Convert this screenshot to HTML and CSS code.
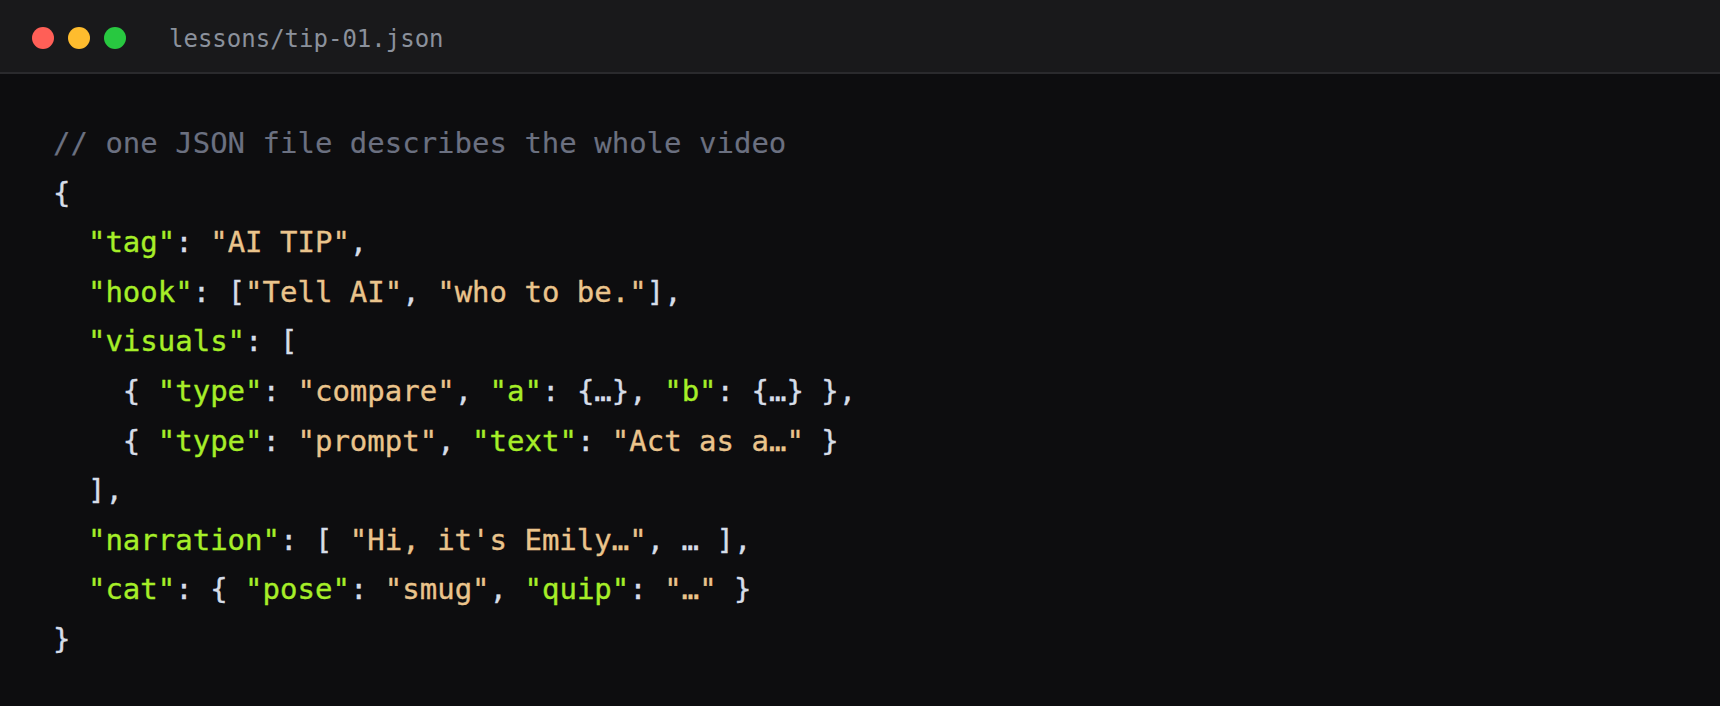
FILE: index.html
```html
<!DOCTYPE html>
<html lang="en">
<head>
<meta charset="utf-8">
<title>lessons/tip-01.json</title>
<link rel="stylesheet" href="styles.css">
</head>
<body>
<div class="window">
  <header class="titlebar">
    <div class="dots">
      <span class="dot red"></span>
      <span class="dot yellow"></span>
      <span class="dot green"></span>
    </div>
    <span class="filename">lessons/tip-01.json</span>
  </header>
  <pre class="code"><span class="c">// one JSON file describes the whole video</span>
<span class="p">{</span>
  <span class="k">"tag"</span><span class="p">:</span> <span class="s">"AI TIP"</span><span class="p">,</span>
  <span class="k">"hook"</span><span class="p">:</span> <span class="p">[</span><span class="s">"Tell AI"</span><span class="p">,</span> <span class="s">"who to be."</span><span class="p">],</span>
  <span class="k">"visuals"</span><span class="p">:</span> <span class="p">[</span>
    <span class="p">{</span> <span class="k">"type"</span><span class="p">:</span> <span class="s">"compare"</span><span class="p">,</span> <span class="k">"a"</span><span class="p">:</span> <span class="p">{…},</span> <span class="k">"b"</span><span class="p">:</span> <span class="p">{…} },</span>
    <span class="p">{</span> <span class="k">"type"</span><span class="p">:</span> <span class="s">"prompt"</span><span class="p">,</span> <span class="k">"text"</span><span class="p">:</span> <span class="s">"Act as a…"</span> <span class="p">}</span>
  <span class="p">],</span>
  <span class="k">"narration"</span><span class="p">:</span> <span class="p">[</span> <span class="s">"Hi, it's Emily…"</span><span class="p">, … ],</span>
  <span class="k">"cat"</span><span class="p">:</span> <span class="p">{</span> <span class="k">"pose"</span><span class="p">:</span> <span class="s">"smug"</span><span class="p">,</span> <span class="k">"quip"</span><span class="p">:</span> <span class="s">"…"</span> <span class="p">}</span>
<span class="p">}</span></pre>
</div>
</body>
</html>
```
FILE: styles.css
```css
html, body {
  margin: 0;
  padding: 0;
  background: #ffffff;
}

.window {
  display: flex;
  flex-direction: column;
  background: #0d0d0f;
  font-family: "DejaVu Sans Mono", "Liberation Mono", monospace;
}

.titlebar {
  display: flex;
  align-items: center;
  gap: 43px;
  height: 74px;
  padding: 4px 0 0 32px;
  box-sizing: border-box;
  background: #19191b;
  border-bottom: 2px solid #2a2a2d;
}

.dots {
  display: flex;
  gap: 14px;
}

.dot {
  width: 22px;
  height: 22px;
  border-radius: 50%;
}

.red { background: #ff5f57; }
.yellow { background: #febc2e; }
.green { background: #28c840; }

.filename {
  font-size: 24px;
  color: #8b919c;
  padding-top: 2px;
}

.code {
  margin: 0;
  padding: 45px 0 41px 53px;
  font-family: "DejaVu Sans Mono", "Liberation Mono", monospace;
  font-size: 29px;
  line-height: 49.6px;
  color: #d6dde8;
  white-space: pre;
  -webkit-text-stroke: 0.35px currentColor;
}

.c { color: #6b7080; -webkit-text-stroke: 0.15px currentColor; }
.k { color: #a6ee28; }
.s { color: #eac48c; }
.p { color: #d6dde8; }
```
